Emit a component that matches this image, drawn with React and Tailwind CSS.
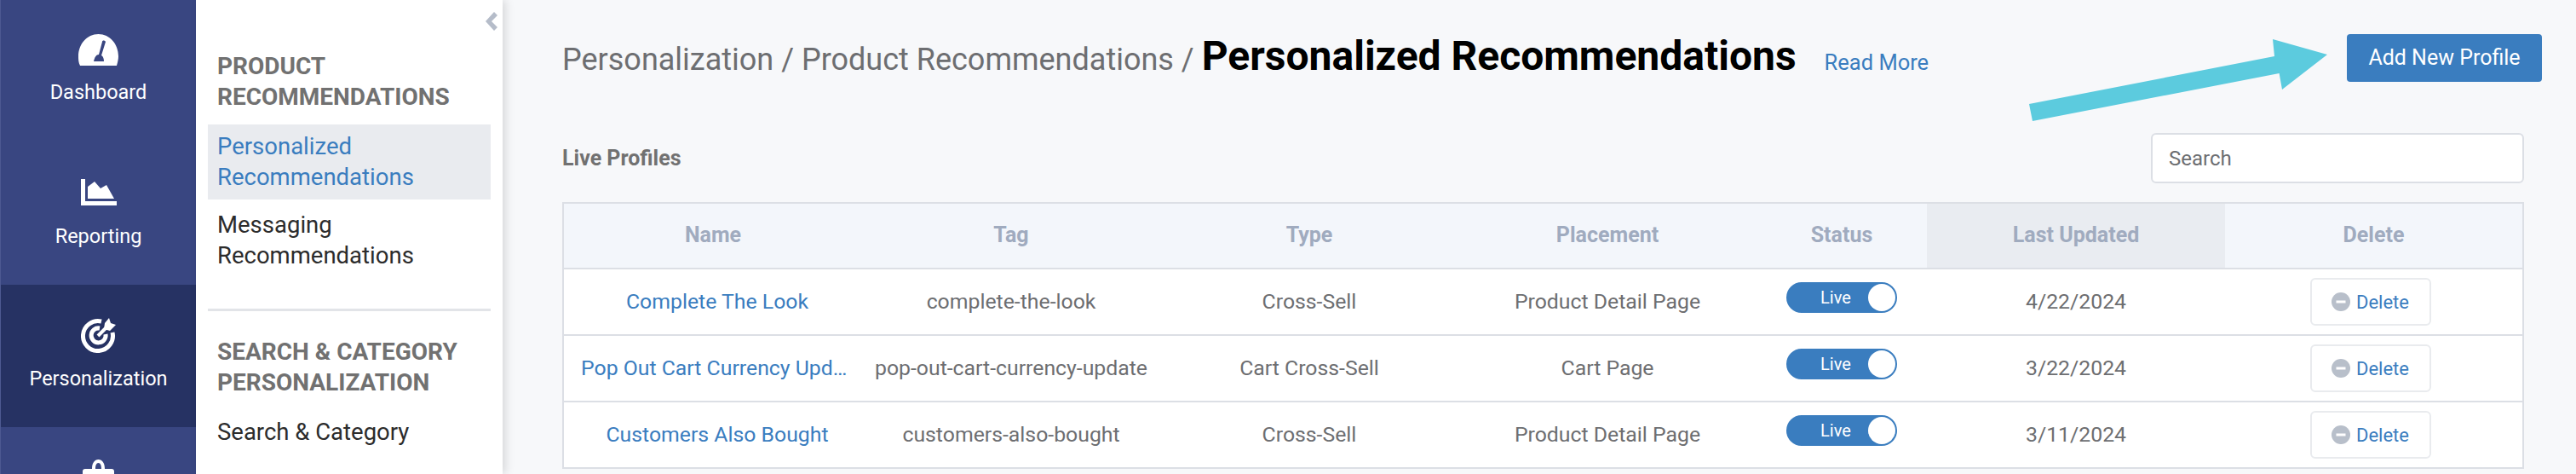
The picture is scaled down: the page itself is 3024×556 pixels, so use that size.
import { useState } from 'react';

const rows = [
    { name: 'Complete The Look', tag: 'complete-the-look', type: 'Cross-Sell', placement: 'Product Detail Page', updated: '4/22/2024' },
    { name: 'Pop Out Cart Currency Update', tag: 'pop-out-cart-currency-update', type: 'Cart Cross-Sell', placement: 'Cart Page', updated: '3/22/2024' },
    { name: 'Customers Also Bought', tag: 'customers-also-bought', type: 'Cross-Sell', placement: 'Product Detail Page', updated: '3/11/2024' },
];

const columns = 'grid grid-cols-[350px_350px_350px_350px_200px_350px_1fr]';

function DashboardIcon() {
    return (
        <svg width="47" height="37" viewBox="0 0 47 37" fill="white">
            <path fillRule="evenodd" d="M2 37 C0 33 0 30 0 26 C0 12 10 0 23.5 0 C37 0 47 12 47 26 C47 30 46 33 45 37 Z M32 9 C31 7 28 7 28 9 L24 24 C21 24 19 27 18 32 H30 C30 29 29 26 27 25 Z" />
        </svg>
    );
}

function ReportingIcon() {
    return (
        <svg width="42" height="31" viewBox="0 0 42 31" fill="white">
            <path d="M0 0 H5 V26 H42 V31 H0 Z" />
            <path d="M8 23 V9 L16 3 L23 11 L30 7 L39 23 Z" />
        </svg>
    );
}

function PersonalizationIcon() {
    return (
        <svg width="42" height="42" viewBox="0 0 42 42" fill="none">
            <path d="M24 5 A17.5 17.5 0 1 0 37 18" stroke="white" strokeWidth="5" />
            <path d="M22 13 A8.5 8.5 0 1 0 29 20" stroke="white" strokeWidth="5" />
            <path d="M20 22 L30 12" stroke="white" strokeWidth="4" />
            <path d="M28 7 L33 1 L35 7 L41 9 L34 16 L27 14 Z" fill="white" />
        </svg>
    );
}

function BagIcon() {
    return (
        <svg width="37" height="20" viewBox="0 0 37 20" fill="white">
            <path fillRule="evenodd" d="M11 11 C11 4 14 0 18.5 0 C23 0 26 4 26 11 H34 C36 11 37 12 37 14 V20 H0 V14 C0 12 1 11 3 11 Z M15 11 H22 C22 7 21 4 18.5 4 C16 4 15 7 15 11 Z" />
        </svg>
    );
}

function NavItem({ icon, label, active, className, labelClass }) {
    return (
        <a href="#" className={`flex shrink-0 flex-col items-center text-white ${active ? 'bg-[#263263]' : ''} ${className}`}>
            {icon}
            {label && <span className={`text-[23.5px] leading-[28px] ${labelClass}`}>{label}</span>}
        </a>
    );
}

function LiveToggle() {
    const [live, setLive] = useState(true);
    return (
        <button
            onClick={() => setLive(!live)}
            className="relative mb-[10px] h-[36px] w-[130px] rounded-full border-2 border-[#3a7dbf] bg-[#3a7dbf] text-white"
        >
            <span className="absolute left-[38px] top-[4px] text-[20px] leading-[24px]">Live</span>
            <span className="absolute right-0 top-0 h-[32px] w-[32px] rounded-full bg-white" />
        </button>
    );
}

function Row({ row }) {
    return (
        <div className={`${columns} h-[78px] items-center border-b-2 border-[#dcdfe5] bg-white text-center text-[24.8px] text-[#6d6e71]`}>
            <a href="#" className="truncate pl-5 pr-[10px] text-[#3a7dbf]">{row.name}</a>
            <div>{row.tag}</div>
            <div>{row.type}</div>
            <div>{row.placement}</div>
            <div className="flex justify-center"><LiveToggle /></div>
            <div>{row.updated}</div>
            <div className="flex justify-center">
                <button className="mr-[8px] flex h-[56px] w-[142px] items-center justify-center gap-[7px] rounded-md border-2 border-[#e9ebee] bg-white text-[22px] text-[#3a7dbf]">
                    <svg width="22" height="22" viewBox="0 0 22 22">
                        <circle cx="11" cy="11" r="11" fill="#b8bfca" />
                        <rect x="5.5" y="9.5" width="11" height="3" fill="white" />
                    </svg>
                    Delete
                </button>
            </div>
        </div>
    );
}

export default function App() {
    return (
        <div className="flex h-[556px] w-[3024px] overflow-hidden bg-[#f7f8fa] font-['Roboto',sans-serif]">
            {/* Main nav */}
            <div className="flex w-[230px] shrink-0 flex-col border-l border-[#4d5991] bg-[#394681]">
                <NavItem icon={<DashboardIcon />} label="Dashboard" className="h-[167px] pt-[40px]" labelClass="mt-[17px]" />
                <NavItem icon={<ReportingIcon />} label="Reporting" className="h-[167px] pt-[43px]" labelClass="mt-[22px]" />
                <NavItem icon={<PersonalizationIcon />} label="Personalization" active className="h-[167px] pt-[38px]" labelClass="mt-[16px]" />
                <NavItem icon={<BagIcon />} className="pt-[38px]" />
            </div>

            {/* Sub nav */}
            <div className="relative w-[360px] shrink-0 bg-white pl-[14px] pr-[14px] pt-[60px] shadow-[4px_0_10px_rgba(0,0,0,0.12)]">
                <svg className="absolute right-[6px] top-[14px]" width="14" height="22" viewBox="0 0 14 22" fill="#b5bcc9">
                    <path d="M10 0 L14 4 L7 11 L14 18 L10 22 L0 11 Z" />
                </svg>
                <h3 className="px-[11px] text-[28px] font-bold leading-[36px] text-[#717171]">PRODUCT RECOMMENDATIONS</h3>
                <a href="#" className="mt-[14px] block bg-[#e9ebef] px-[11px] py-[8px] text-[27.5px] leading-[36px] text-[#3a7dbf]">Personalized Recommendations</a>
                <a href="#" className="mt-[12px] block px-[11px] text-[27.5px] leading-[36px] text-[#2c2c2c]">Messaging Recommendations</a>
                <div className="mt-[44px] h-[3px] bg-[#e2e4e8]" />
                <h3 className="mt-[30px] px-[11px] text-[28px] font-bold leading-[36px] text-[#717171]">SEARCH &amp; CATEGORY PERSONALIZATION</h3>
                <a href="#" className="mt-[22px] block px-[11px] text-[27.5px] leading-[36px] text-[#2c2c2c]">Search &amp; Category</a>
            </div>

            {/* Content */}
            <div className="min-w-0 flex-1 pl-[70px] pr-[61px]">
                <div className="relative flex h-[156px] items-start">
                    <h1 className="mt-[38px] flex items-baseline gap-[9px] text-[36px] leading-[56px] text-[#6d6e71]">
                        Personalization / Product Recommendations /
                        <span className="text-[48px] font-bold text-black">Personalized Recommendations</span>
                    </h1>
                    <a href="#" className="ml-[33px] mt-[57px] text-[25.5px] leading-[32px] text-[#3a7dbf]">Read More</a>
                    <svg className="absolute left-[1722px] top-[46px]" width="352" height="96" viewBox="0 0 352 96" fill="#5ccbde">
                        <path d="M0 76 L288 20 L286 0 L350 18 L297 59 L293.6 40 L4 96 Z" />
                    </svg>
                    <button className="ml-auto mr-[-21px] mt-[40px] h-[56px] w-[229px] rounded bg-[#3a7dbf] text-[25px] text-white">Add New Profile</button>
                </div>
                <div className="flex h-[81px] items-start justify-between">
                    <div className="mt-[11px] text-[25px] font-bold text-[#717171]">Live Profiles</div>
                    <input
                        placeholder="Search"
                        className="h-[59px] w-[438px] rounded-md border-2 border-[#dcdfe5] bg-white px-[19px] text-[24px] outline-none placeholder:text-[#6d6e71]"
                    />
                </div>
                <div className="border-x-2 border-t-2 border-[#dcdfe5]">
                    <div className={`${columns} h-[77px] border-b-2 border-[#dcdfe5] bg-[#f3f6fb] text-center text-[25px] font-bold leading-[73px] text-[#a0abbf]`}>
                        <div>Name</div>
                        <div>Tag</div>
                        <div>Type</div>
                        <div>Placement</div>
                        <div>Status</div>
                        <div className="bg-[#e9ecf1]">Last Updated</div>
                        <div>Delete</div>
                    </div>
                    {rows.map((row) => (
                        <Row key={row.tag} row={row} />
                    ))}
                </div>
            </div>
        </div>
    );
}
